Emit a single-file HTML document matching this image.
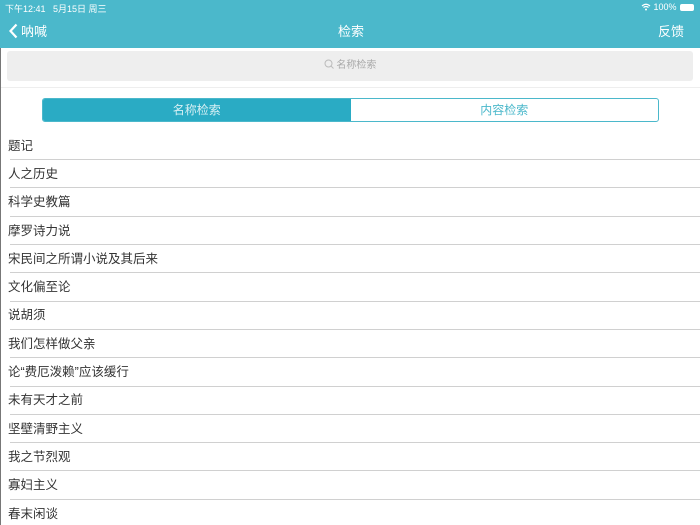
<!DOCTYPE html>
<html><head><meta charset="utf-8"><style>
*{margin:0;padding:0;box-sizing:border-box}
body{width:700px;height:525px;overflow:hidden;background:#fff;font-family:"Liberation Sans","Noto Sans CJK SC",sans-serif;position:relative}
.hdr{position:absolute;left:0;top:0;width:700px;height:48px;background:#4bb8cb;color:#fff}
.sb{position:absolute;top:2px;font-size:9px}
.nav{position:absolute;top:21px;font-size:13px}
.search{position:absolute;left:7px;top:51px;width:686px;height:30px;background:#eeeeee;border-radius:3px;color:#aaa;font-size:10px;text-align:center;line-height:30px}
.sep{position:absolute;left:0;top:87px;width:700px;height:1px;background:#eee}
.seg{position:absolute;left:42px;top:98px;width:617px;height:24px;border:1px solid #4bb8cb;border-radius:3px;display:flex;font-size:12px;line-height:22px;text-align:center;overflow:hidden}
.seg div{flex:1}
.seg .a{background:#2aabc4;color:#d8f0f4}
.seg .b{color:#4bb8cb}
.row{position:absolute;left:8px;font-size:12.5px;color:#333}
.ln{position:absolute;left:10px;width:690px;height:1px;background:#d0d0d0}
.lb{position:absolute;left:0;top:48px;width:1px;height:477px;background:#777}
</style></head><body>
<div class="hdr">
<div class="sb" style="left:5px">下午12:41&nbsp;&nbsp; 5月15日 周三</div>
<div class="sb" style="left:641px">
<svg width="10" height="8" viewBox="0 0 10 8" style="vertical-align:-1px"><path d="M1 3Q5 -0.5 9 3M2.5 4.5Q5 2.5 7.5 4.5" stroke="#fff" stroke-width="1.2" fill="none"/><circle cx="5" cy="6.5" r="1" fill="#fff"/></svg> 100%</div>
<div style="position:absolute;left:680px;top:4px;width:14px;height:7px;border:1px solid #fff;border-radius:2px;background:#fff"></div>
<svg style="position:absolute;left:8px;top:23px" width="11" height="16"><path d="M8.5 1.5L2.5 8L8.5 14.5" stroke="#fff" stroke-width="2.2" fill="none"/></svg>
<div class="nav" style="left:21px">呐喊</div>
<div class="nav" style="left:338px">检索</div>
<div class="nav" style="left:658px">反馈</div>
</div>
<div class="search"><svg width="10" height="10" style="vertical-align:-1px"><circle cx="4.5" cy="4.5" r="3.5" stroke="#bbb" fill="none"/><path d="M7 7L9.5 9.5" stroke="#bbb"/></svg> 名称检索</div>
<div class="sep"></div>
<div class="seg"><div class="a">名称检索</div><div class="b">内容检索</div></div>
<div class="lb"></div>
<div class="row" style="top:135px">题记</div><div class="ln" style="top:159px"></div>
<div class="row" style="top:163px">人之历史</div><div class="ln" style="top:187px"></div>
<div class="row" style="top:191px">科学史教篇</div><div class="ln" style="top:216px"></div>
<div class="row" style="top:220px">摩罗诗力说</div><div class="ln" style="top:244px"></div>
<div class="row" style="top:248px">宋民间之所谓小说及其后来</div><div class="ln" style="top:272px"></div>
<div class="row" style="top:276px">文化偏至论</div><div class="ln" style="top:301px"></div>
<div class="row" style="top:304px">说胡须</div><div class="ln" style="top:329px"></div>
<div class="row" style="top:333px">我们怎样做父亲</div><div class="ln" style="top:357px"></div>
<div class="row" style="top:361px">论“费厄泼赖”应该缓行</div><div class="ln" style="top:386px"></div>
<div class="row" style="top:389px">未有天才之前</div><div class="ln" style="top:414px"></div>
<div class="row" style="top:418px">坚壁清野主义</div><div class="ln" style="top:442px"></div>
<div class="row" style="top:446px">我之节烈观</div><div class="ln" style="top:470px"></div>
<div class="row" style="top:474px">寡妇主义</div><div class="ln" style="top:499px"></div>
<div class="row" style="top:503px">春末闲谈</div>
</body></html>
